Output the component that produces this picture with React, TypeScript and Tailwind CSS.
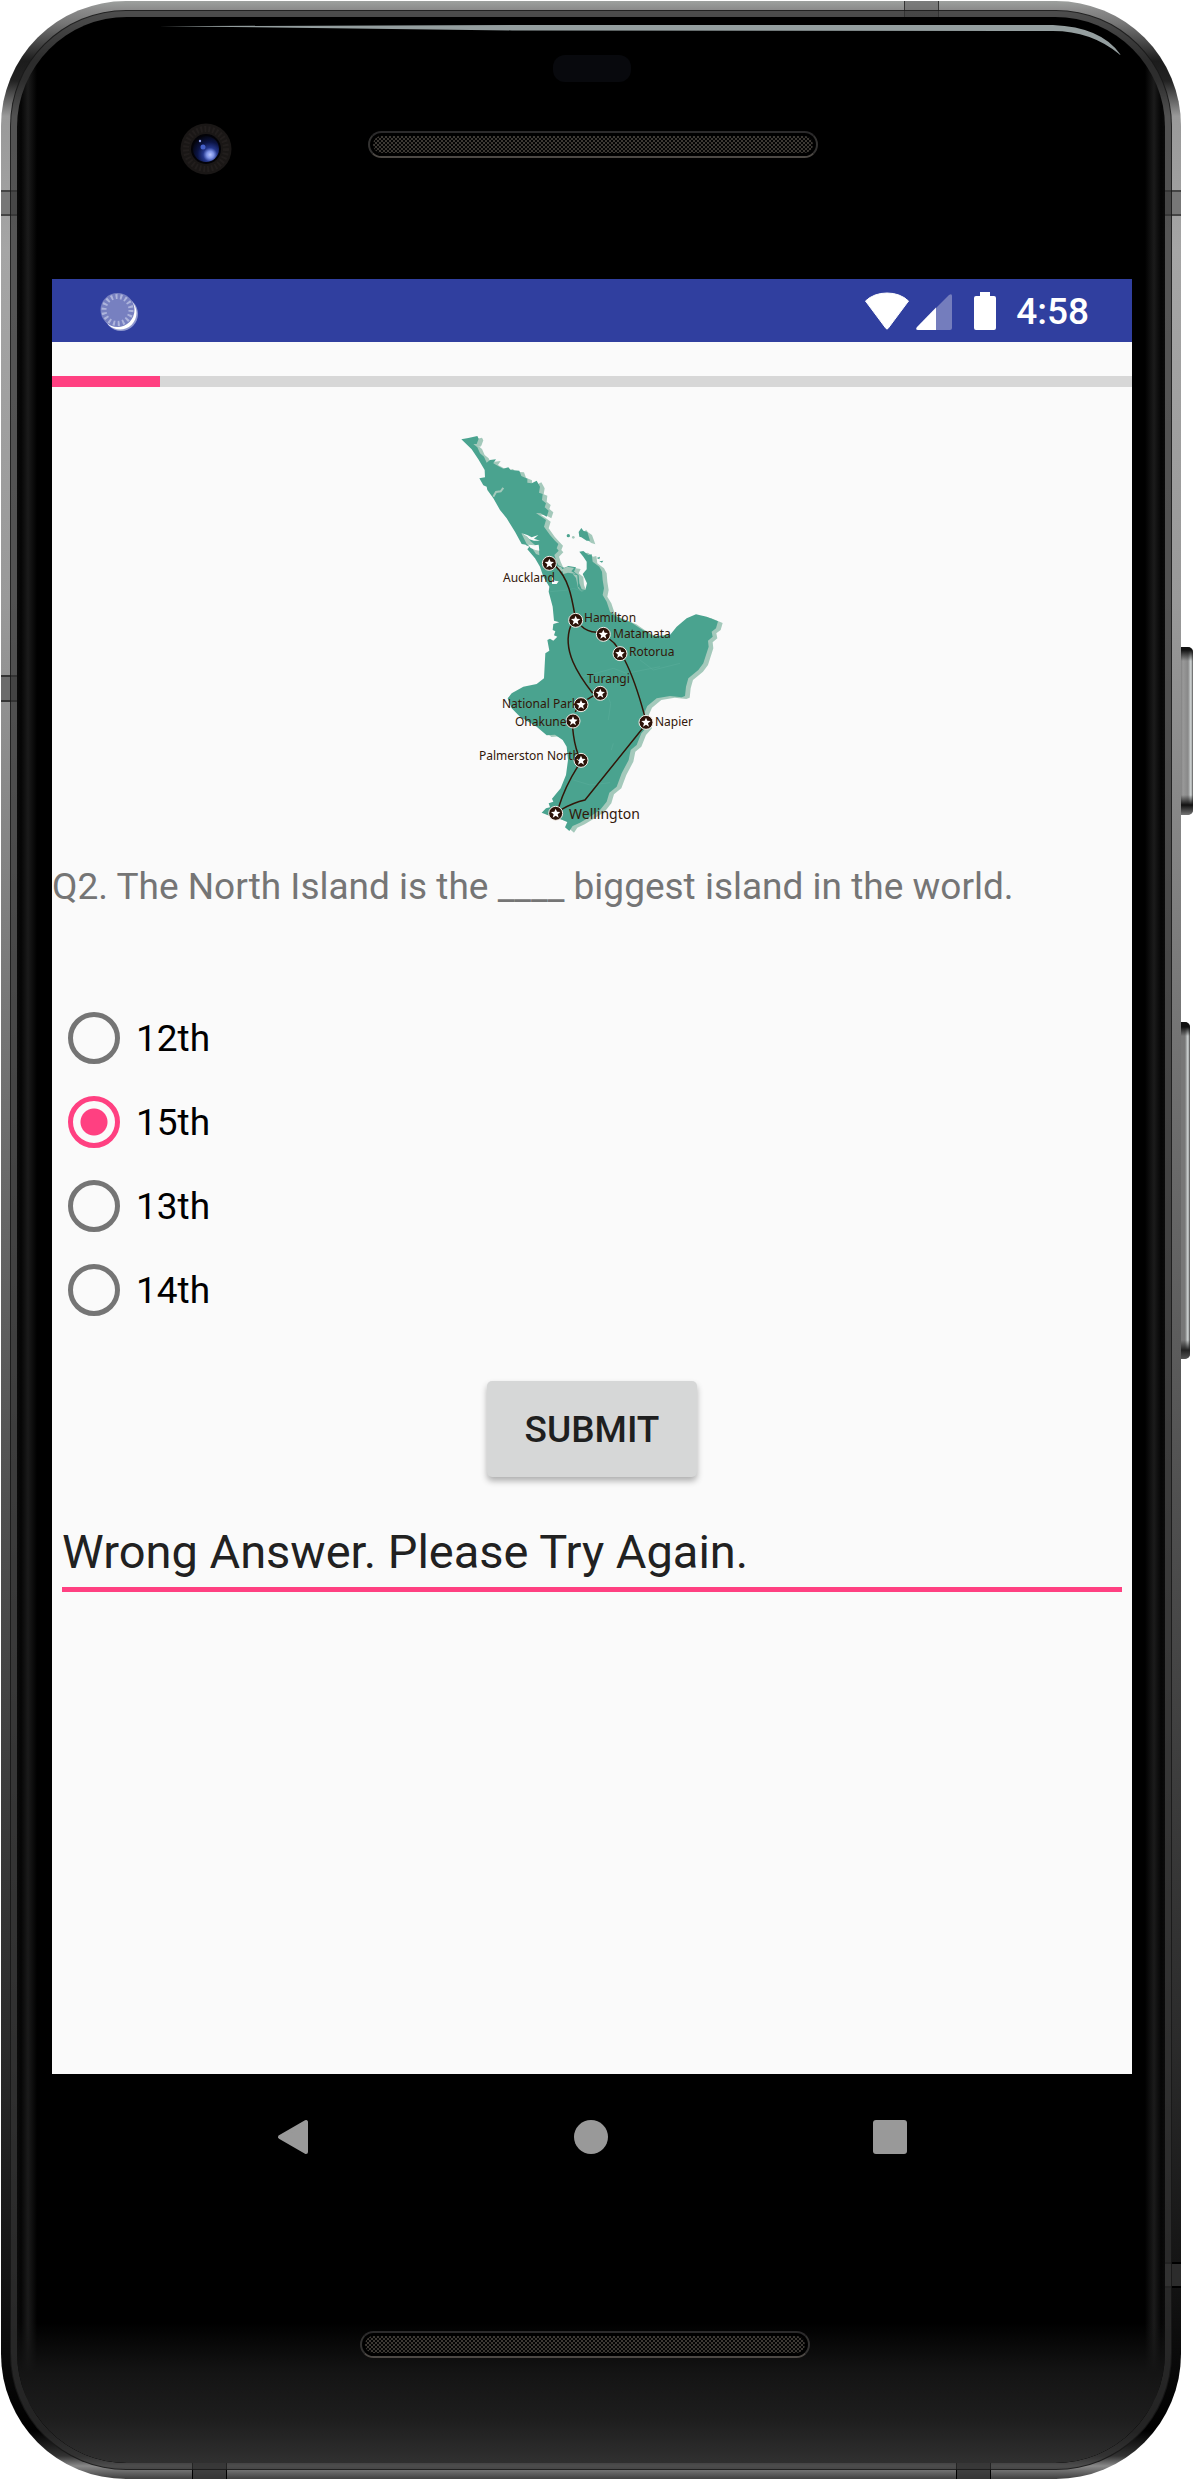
import { useState } from "react";

const LAND =
  "M64 58L85 54L112 48L116 56L110 72L100 72L112 82L120 100L132 110L140 128L150 120L168 118L160 130L178 140L190 146L205 142L212 150L238 152L244 168L262 176L262 188L275 190L290 182L300 200L297 218L308 222L306 240L318 250L314 262L326 272L320 290L302 280L288 279L304 290L318 300L312 320L330 345L345 362L355 372L350 385L356 392L343 405L348 420L355 436L372 444L385 438L408 442L402 455L416 466L418 490L425 508L436 510L441 490L428 462L440 448L440 425L430 410L418 395L430 393L445 405L455 403L458 425L478 440L486 455L488 480L492 505L488 525L500 545L510 575L530 590L575 608L600 625L640 648L690 645L710 620L740 595L768 583L800 590L834 604L828 625L815 635L818 650L804 662L806 680L790 730L775 750L745 775L738 800L735 828L725 832L690 828L650 835L622 858L610 885L622 920L604 940L590 975L572 990L566 1020L545 1060L530 1100L508 1118L500 1145L480 1170L450 1190L420 1208L398 1218L388 1233L375 1222L382 1206L355 1195L330 1188L305 1178L318 1165L330 1162L326 1150L340 1145L336 1136L362 1105L378 1065L384 1020L380 980L368 960L345 944L320 946L290 920L240 890L215 865L203 835L215 820L250 800L290 792L312 775L316 700L328 692L322 660L330 656L340 662L352 650L342 646L346 634L338 630L340 612L358 607L342 602L338 560L326 515L328 500L310 470L300 440L285 415L262 388L268 380L258 374L245 372L225 335L200 295L180 270L160 235L142 210L140 200L130 196L118 175L135 172L134 150L115 118L95 88Z";

const STOPS = [
  { name: "Auckland", cx: 328, cy: 430, x: 63, y: 162 },
  { name: "Hamilton", cx: 407, cy: 601, x: 144, y: 202 },
  { name: "Matamata", cx: 490, cy: 643, x: 173, y: 218 },
  { name: "Rotorua", cx: 540, cy: 701, x: 189, y: 236 },
  { name: "Turangi", cx: 481, cy: 820, x: 147, y: 263 },
  { name: "National Park", cx: 423, cy: 854, x: 62, y: 288 },
  { name: "Ohakune", cx: 399, cy: 903, x: 75, y: 306 },
  { name: "Napier", cx: 618, cy: 907, x: 215, y: 306 },
  { name: "Palmerston North", cx: 423, cy: 1021, x: 39, y: 340 },
  { name: "Wellington", cx: 347, cy: 1180, x: 129, y: 399 },
];

function NorthIslandMap() {
  return (
    <svg viewBox="2 0 300 420" className="mx-auto h-[420px] w-[300px]" role="img" aria-label="Map of the North Island">
      <g transform="scale(0.33333)">
        <g fill="#a4c9bb" transform="translate(14 5)">
          <path d={LAND} />
          <path d="M416 336L424 324L430 332L442 340L452 368L440 364L424 352L418 350Z" />
        </g>
        <g fill="#4aa38f">
          <path d={LAND} />
          <path d="M416 336L424 324L430 332L442 336L450 362L440 362L424 352L418 350Z" />
          <circle cx="385" cy="347" r="5" />
          <path d="M470 414l10 -4l-2 8zM478 424l12 -2l-4 6z" />
        </g>
        <circle cx="400" cy="352" r="4" fill="#a4c9bb" />
        <path d="M122 78l-12 -4M160 230l8 -14l14 -2l8 -10" stroke="#a4c9bb" strokeWidth="6" fill="none" />
        <path d="M245 340L262 345L275 352L295 345L282 356L300 362L282 362L268 358L260 350Z" fill="#fafafa" />
        <path d="M244 340L262 350L272 364L286 376L296 378L298 406L288 402L276 384L260 372Z" fill="#a4c9bb" />
        <path d="M264 374L284 376L296 374L298 392L286 390L272 384Z" fill="#fafafa" />
        <path d="M352 438l12 4l6 12l-14 0zM366 448l16 -8l20 4l-8 10l14 8l-24 -4l-14 4z" fill="#a4c9bb" />
        <path d="M336 470l8 12l12 2l-6 8l-14 0z" fill="#fafafa" />
        <path d="M398 462L412 466L414 500L424 512L434 512L424 514L414 504L408 474Z" fill="#a4c9bb" />
        <path
          d="M330 515L385 510L400 505L430 515M505 900L512 850L500 820M430 770L520 745L560 760L660 740M520 970l-6 20M400 1080L450 1095L510 1088M600 720l40 30l80 -20"
          stroke="#5bae9b"
          strokeWidth="1.5"
          fill="none"
        />
        <g stroke="#321709" strokeWidth="4.5" fill="none" strokeLinejoin="round">
          <path d="M348 440C385 475 395 530 404 582" />
          <path d="M424 618Q440 635 470 637" />
          <path d="M508 657Q524 668 532 682" />
          <path d="M554 720Q585 780 614 888" />
          <path d="M608 925L435 1140Q400 1148 365 1168" />
          <path d="M392 618C365 690 415 765 458 820" />
          <path d="M462 826L442 838M406 876L410 868" />
          <path d="M398 924Q402 970 414 1002" />
          <path d="M413 1040Q375 1100 356 1162" />
        </g>
        {STOPS.map((s) => (
          <g key={s.name} transform={`translate(${s.cx} ${s.cy})`}>
            <circle r="21" fill="#2c1208" stroke="#f4efe9" strokeWidth="3" />
            <path d="M0 -14L4 -5L14 -4L6 3L9 13L0 7L-9 13L-6 3L-14 -4L-4 -5Z" fill="#fff" />
          </g>
        ))}
      </g>
      {STOPS.map((s) => (
        <text
          key={s.name}
          x={s.x}
          y={s.y}
          fill="#321709"
          className={s.name === "Wellington" ? "font-['Noto_Sans'] text-[14px]" : "font-['Noto_Sans'] text-[12px]"}
        >
          {s.name}
        </text>
      ))}
    </svg>
  );
}

function Speaker() {
  return (
    <div className="h-[27px] w-[450px] rounded-full border-2 border-t-[#2b2a2b] border-r-[#333231] border-b-[#4c4844] border-l-[#333231] bg-black p-[3px]">
      <div className="h-full rounded-full bg-[#050505] bg-[radial-gradient(circle_at_1px_1px,#3d3934_1px,transparent_1px),radial-gradient(circle_at_3px_3px,#3d3934_1px,transparent_1px)] bg-size-[4px_4px]" />
    </div>
  );
}

function Camera() {
  return (
    <svg viewBox="0 0 52 52" className="size-[52px]" aria-hidden="true">
      <defs>
        <radialGradient id="lens" cx="0.66" cy="0.72" r="0.75">
          <stop offset="0" stopColor="#b9c6ff" />
          <stop offset="0.18" stopColor="#7d92e6" />
          <stop offset="0.36" stopColor="#24368a" />
          <stop offset="0.65" stopColor="#0b1444" />
          <stop offset="1" stopColor="#04050f" />
        </radialGradient>
      </defs>
      <circle cx="26" cy="26" r="25.5" fill="#1a1716" />
      <circle cx="26" cy="26" r="20" fill="none" stroke="#221e1d" strokeWidth="6" strokeDasharray="2 2" />
      <circle cx="26" cy="26" r="15" fill="#030308" />
      <circle cx="26" cy="26" r="13" fill="url(#lens)" />
      <circle cx="23" cy="24" r="2.5" fill="#4560c8" />
      <circle cx="20" cy="18" r="1.2" fill="#8c9ce8" />
    </svg>
  );
}

function StatusBar() {
  return (
    <header className="flex h-[63px] items-center bg-[#303f9f] pr-[43px] pl-[48px] text-white">
      <svg viewBox="0 0 38 40" className="h-[40px] w-[38px]" aria-hidden="true">
        <circle cx="21" cy="23" r="17" fill="#8f98cf" />
        <circle cx="20" cy="22" r="16.5" fill="#fff" />
        <circle cx="17.500" cy="19" r="17" fill="#7780c0" />
        <circle cx="17.500" cy="19" r="13.5" fill="none" stroke="#adb4dc" strokeWidth="5" strokeDasharray="2 2.71" />
      </svg>
      <svg viewBox="0 0 46 38" className="ml-auto h-[38px] w-[46px]" aria-hidden="true">
        <path
          d="M1.5 9Q10 1 23 1Q36 1 44.500 9L24 36.500Q23 37.500 22 36.500Z"
          fill="#fff"
          stroke="#fff"
          strokeLinejoin="round"
        />
      </svg>
      <svg viewBox="0 0 36 38" className="ml-[6px] h-[38px] w-[36px]" aria-hidden="true">
        <path d="M20 16L33 3Q36 1 36 4V36Q36 38 34 38H20Z" fill="#747dbd" />
        <path d="M20 15.500V38H2Q-1 38 1 35Z" fill="#fff" />
      </svg>
      <svg viewBox="0 0 22 38" className="ml-[22px] h-[38px] w-[22px]" aria-hidden="true">
        <path d="M6 0H16V4H20Q22 4 22 6V36Q22 38 20 38H2Q0 38 0 36V6Q0 4 2 4H6Z" fill="#fff" />
      </svg>
      <span className="ml-[20px] pt-[2px] text-[37px] leading-[43px] font-medium">4:58</span>
    </header>
  );
}

function Quiz() {
  const [choice, setChoice] = useState("15th");
  return (
    <main className="flex flex-1 flex-col bg-[#fafafa] pt-[34px]">
      <div
        role="progressbar"
        aria-label="Quiz progress"
        aria-valuenow={10}
        aria-valuemin={0}
        aria-valuemax={100}
        className="h-[11px] bg-[#d7d7d7]"
      >
        <div className="h-full w-1/10 bg-[#ff4081]" />
      </div>
      <div className="mt-[33px]">
        <NorthIslandMap />
      </div>
      <fieldset>
        <legend className="pt-[25px] text-[37px] leading-[44px] text-[#757575]">
          Q2. The North Island is the ____ biggest island in the world.
        </legend>
        <div className="mt-[87px] flex flex-col">
          {["12th", "15th", "13th", "14th"].map((option) => (
            <label key={option} className="flex h-[84px] items-center gap-[16px] pl-[16px] text-[37px] leading-[44px] text-black">
              <input
                type="radio"
                name="answer"
                value={option}
                checked={choice === option}
                onChange={() => setChoice(option)}
                className="size-[52px] appearance-none rounded-full border-[5px] border-[#757575] checked:border-[#ff4081] checked:bg-[radial-gradient(circle,#ff4081_13px,transparent_14px)]"
              />
              <span className="pt-[2px]">{option}</span>
            </label>
          ))}
        </div>
      </fieldset>
      <button
        type="button"
        className="mx-auto mt-[49px] h-[96px] rounded-[5px] bg-[#d6d7d7] px-[38px] pt-[2px] text-[37px] leading-[44px] font-medium text-[#1f1f1f] shadow-[0_4px_6px_rgba(0,0,0,0.3)]"
      >
        SUBMIT
      </button>
      <div className="mx-[10px] mt-[44px] flex">
        <input
          type="text"
          aria-label="Result"
          defaultValue="Wrong Answer. Please Try Again."
          className="h-[71px] w-full border-b-[5px] border-[#ff4081] bg-transparent pb-[6px] text-[47px] leading-[56px] text-[#212121] outline-none"
        />
      </div>
    </main>
  );
}

function NavBar() {
  return (
    <nav className="flex h-[126px] items-center justify-center gap-[265px] bg-black">
      <button type="button" aria-label="Back">
        <svg viewBox="0 0 32 36" className="h-[36px] w-[32px]" aria-hidden="true">
          <path d="M3 18L29 3V33Z" fill="#999" stroke="#999" strokeWidth="4" strokeLinejoin="round" />
        </svg>
      </button>
      <button type="button" aria-label="Home" className="size-[34px] rounded-full bg-[#999]" />
      <button type="button" aria-label="Recent apps" className="size-[34px] rounded-[3px] bg-[#999]" />
    </nav>
  );
}

export default function App() {
  return (
    <div className="relative flex min-h-screen bg-white py-px pr-[13px] pl-px font-[Roboto,sans-serif]">
      <div className="absolute top-[647px] right-px h-[168px] w-[13px] rounded-r-[5px] bg-[linear-gradient(to_right,#777_0,#999_3px,#888_8px,#d5dada_11px,#555_13px)]">
        <div className="h-full rounded-r-[5px] bg-[linear-gradient(#111_3px,transparent_14px,transparent_148px,#111_158px,#777_168px)]" />
      </div>
      <div className="absolute top-[1022px] right-[4px] h-[337px] w-[10px] rounded-r-[5px] bg-[linear-gradient(to_right,#777_0,#777_5px,#d5dada_8px,#444_10px)]">
        <div className="h-full rounded-r-[5px] bg-[linear-gradient(#111_5px,transparent_14px,transparent_318px,#222_328px,#555_337px)]" />
      </div>

      <div className="relative flex flex-1 overflow-hidden rounded-[125px] bg-[linear-gradient(#9da09e_0,#8c8c8c_8px,#777_22px,#1c1c1c_60px,#222_80px,#999_115px,#a5a5a5_250px,#999_600px,#777_1000px,#505050_1500px,#2a2a2a_2050px,#111_2300px,#000_2430px,#333_2455px,#8a8a8a_2465px,#444_2477px)]">
        <div className="absolute top-0 left-[76.500%] h-[17px] w-[35px] border-x border-[#333] bg-[#666]/60" />
        <div className="absolute bottom-0 left-[16.200%] h-[17px] w-[35px] border-x border-black bg-[#333]/80" />
        <div className="absolute right-[190px] bottom-0 h-[17px] w-[35px] border-x border-black bg-[#333]/80" />
        <div className="absolute top-[189px] left-0 h-[26px] w-full border-y-2 border-[#444] bg-[#777]" />
        <div className="absolute top-[674px] left-0 h-[27px] w-[20px] border-y-2 border-[#333] bg-[#6b6b6b]" />
        <div className="absolute right-0 bottom-[191px] h-[26px] w-[20px] border-y-2 border-black bg-[#2c2c2c]" />

        <div className="relative m-[9px] flex flex-1 rounded-[116px] border border-[#111]/70 bg-[#333]/70 p-[6px]">
          <div className="relative flex flex-1 flex-col overflow-hidden rounded-[110px] bg-black bg-[linear-gradient(to_right,#0a0a0a_0,#050505_4px,#1b1b1b_11px,#000_20px,#000_calc(100%-20px),#1b1b1b_calc(100%-11px),#050505_calc(100%-4px),#0a0a0a_100%)] pr-[33px] pl-[35px]">
            <div className="absolute inset-x-0 bottom-0 h-[140px] rounded-b-[110px] bg-[linear-gradient(transparent,#141414_50px,#1d1d1d_95px,#303030)]" />
            <div className="absolute top-[8px] right-[44px] left-[142px] flex items-start">
              <div className="h-[6px] flex-1 bg-[#949e9f] [clip-path:polygon(0_20%,40%_0,100%_0,100%_100%,40%_90%)]" />
              <svg viewBox="0 0 80 30" className="h-[30px] w-[80px]" aria-hidden="true">
                <path d="M0 0H12Q60 2 79 29Q80 31 78 29Q50 6 12 6H0Z" fill="#949e9f" />
              </svg>
            </div>

            <div className="relative h-[262px] shrink-0">
              <div className="mx-auto mt-[38px] h-[27px] w-[78px] rounded-[12px] bg-[#08090d]" />
              <div className="mt-[41px] flex items-start pl-[128px]">
                <Camera />
                <div className="ml-[136px] pt-[8px]">
                  <Speaker />
                </div>
              </div>
            </div>

            <div className="relative flex flex-1 flex-col">
              <StatusBar />
              <Quiz />
              <NavBar />
            </div>

            <div className="relative flex h-[263px] shrink-0 justify-center pt-[131px] pr-[14px]">
              <Speaker />
            </div>
          </div>
        </div>
      </div>
    </div>
  );
}
